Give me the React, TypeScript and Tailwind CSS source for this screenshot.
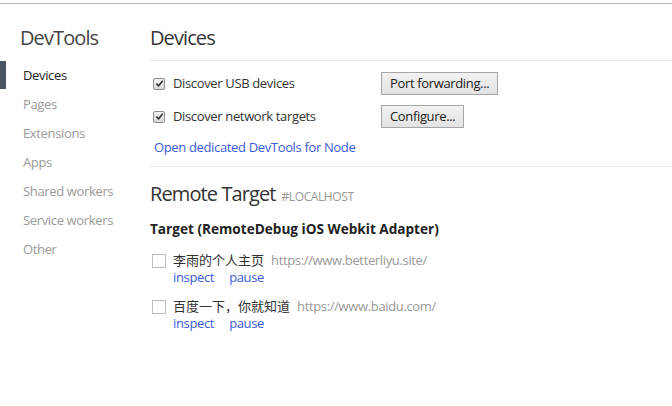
import React from 'react';

const font = { fontFamily: '"Open Sans", "Noto Sans CJK SC", sans-serif' };

const navItems = ['Devices', 'Pages', 'Extensions', 'Apps', 'Shared workers', 'Service workers', 'Other'];

function CheckedBox() {
  return (
    <span className="flex h-[12px] w-[12px] shrink-0 items-center justify-center rounded-[2px] border border-[#8e8e8e] bg-gradient-to-b from-[#f4f4f4] to-[#d8d8d8]">
      <svg viewBox="0 0 10 10" className="h-[9px] w-[9px]">
        <path d="M1.5 5.2 L4 7.6 L8.6 2" fill="none" stroke="#333" strokeWidth="1.8" />
      </svg>
    </span>
  );
}

function SettingRow({ label, button }: { label: string; button: string }) {
  return (
    <div className="flex h-[23px] items-center">
      <div className="flex w-[228px] items-center">
        <CheckedBox />
        <span className="ml-[8px] text-[13px] tracking-[-0.35px] text-[#333]">{label}</span>
      </div>
      <button className="h-[23px] border border-[#a6a6a6] bg-gradient-to-b from-[#f2f2f2] to-[#e2e2e2] px-[8px] text-[13px] leading-none tracking-[-0.35px] text-[#222]">
        {button}
      </button>
    </div>
  );
}

function TargetItem({ title, url }: { title: string; url: string }) {
  return (
    <div className="flex">
      <span className="mt-[1px] h-[14px] w-[14px] shrink-0 border border-[#bdbdbd] bg-white" />
      <div className="ml-[7px] flex flex-col">
        <div className="flex h-[16px] items-center text-[13px]">
          <span className="text-[#333]">{title}</span>
          <span className="ml-[7px] tracking-[-0.35px] text-[#999]">{url}</span>
        </div>
        <div className="flex h-[18px] items-center text-[13px] tracking-[-0.35px] text-[#3b5bd9]">
          <span>inspect</span>
          <span className="ml-[15px]">pause</span>
        </div>
      </div>
    </div>
  );
}

export default function App() {
  return (
    <div className="h-[406px] w-[672px] overflow-hidden bg-white pt-[3px]" style={font}>
      <div className="flex h-full border-t border-[#b5b5b5]">
        <aside className="w-[150px] shrink-0">
          <h1 className="pl-[20px] pt-[20px] text-[20px] leading-[28px] tracking-[-0.9px] text-[#444]">DevTools</h1>
          <nav className="mt-[9px]">
            {navItems.map((item, i) => (
              <div key={item} className="relative flex h-[29px] items-center pl-[23px] text-[13px] tracking-[-0.35px]">
                {i === 0 && <span className="absolute left-0 top-0 h-[28px] w-[6px] bg-[#4a5361]" />}
                <span className={i === 0 ? 'text-[#222]' : 'text-[#9a9a9a]'}>{item}</span>
              </div>
            ))}
          </nav>
        </aside>
        <main className="flex-1">
          <section className="border-b border-[#e8e8e8] pb-[11px]">
            <h2 className="border-b border-[#e8e8e8] pb-[8px] pt-[20px] text-[20px] leading-[28px] tracking-[-0.9px] text-[#333]">Devices</h2>
            <div className="ml-[3px] mt-[11px] flex flex-col gap-[10px]">
              <SettingRow label="Discover USB devices" button="Port forwarding..." />
              <SettingRow label="Discover network targets" button="Configure..." />
            </div>
            <a className="ml-[4px] mt-[11px] block text-[13px] leading-[16px] tracking-[-0.35px] text-[#3b5bd9]">Open dedicated DevTools for Node</a>
          </section>
          <section>
            <h2 className="flex items-baseline pt-[13px] text-[20px] leading-[28px] tracking-[-0.9px] text-[#333]">
              Remote Target
              <span className="ml-[6px] text-[12px] tracking-[-0.4px] text-[#999]">#LOCALHOST</span>
            </h2>
            <h3 className="mt-[9px] text-[13.6px] font-bold leading-[18px] text-[#222]">Target (RemoteDebug iOS Webkit Adapter)</h3>
            <div className="ml-[2px] mt-[15px] flex flex-col gap-[12px]">
              <TargetItem title="李雨的个人主页" url="https://www.betterliyu.site/" />
              <TargetItem title="百度一下，你就知道" url="https://www.baidu.com/" />
            </div>
          </section>
        </main>
      </div>
    </div>
  );
}
